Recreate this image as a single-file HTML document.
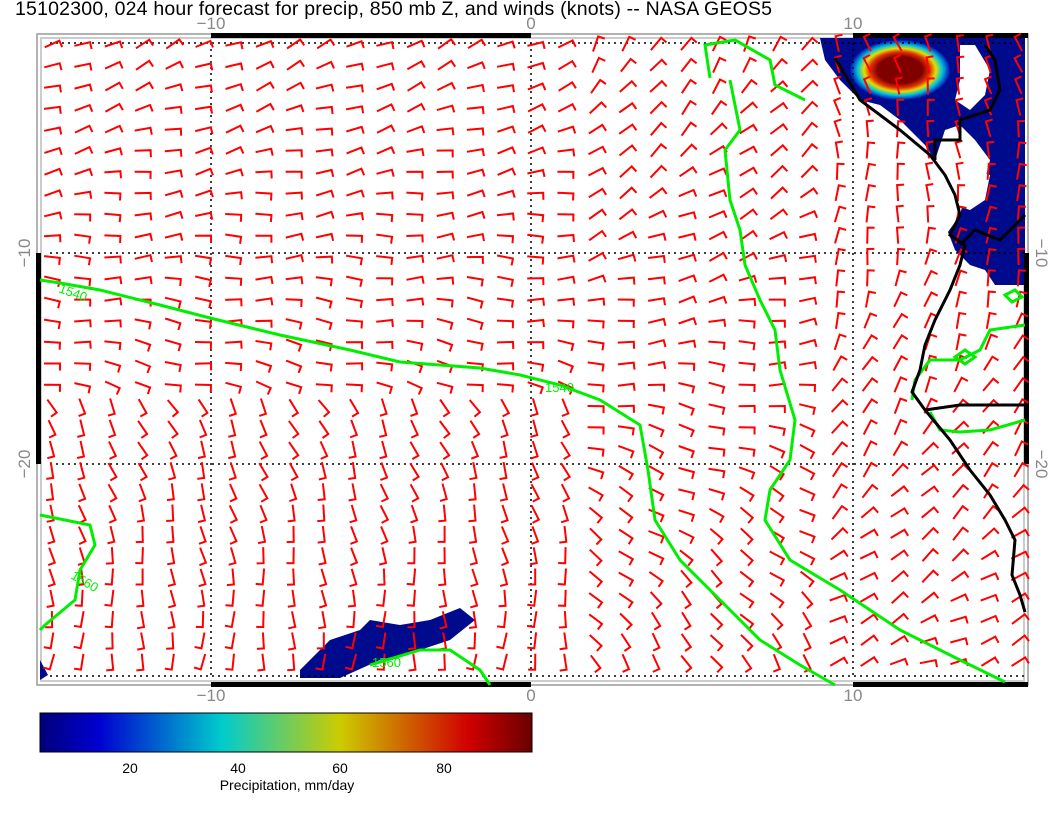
<!DOCTYPE html>
<html><head><meta charset="utf-8"><style>
body{margin:0;background:#fff;width:1056px;height:816px;overflow:hidden;font-family:"Liberation Sans",sans-serif}
</style></head><body>
<svg id="s" width="1056" height="816" xmlns="http://www.w3.org/2000/svg" style="position:absolute;left:0;top:0">
<defs>
<linearGradient id="cb" x1="0" x2="1" y1="0" y2="0">
<stop offset="0" stop-color="#00007a"/><stop offset="0.12" stop-color="#0000d0"/>
<stop offset="0.37" stop-color="#00cccc"/><stop offset="0.61" stop-color="#cccc00"/>
<stop offset="0.87" stop-color="#d00000"/><stop offset="1" stop-color="#6a0000"/>
</linearGradient>
<radialGradient id="rb" cx="0.5" cy="0.5" r="0.5">
<stop offset="0.45" stop-color="#800000"/><stop offset="0.6" stop-color="#e03000"/>
<stop offset="0.72" stop-color="#e0e000"/><stop offset="0.85" stop-color="#00c0e0"/>
<stop offset="1" stop-color="#0010b0"/>
</radialGradient>
</defs>
<text x="15" y="15" font-size="19.5" fill="#000" textLength="757">15102300, 024 hour forecast for precip, 850 mb Z, and winds (knots) -- NASA GEOS5</text>
<rect x="37" y="34" width="991" height="651" fill="none" stroke="#999" stroke-width="1.5"/>
<rect x="41" y="38" width="983" height="643" fill="none" stroke="#ccc" stroke-width="2"/>
<path d="M820,38 L1025,38 L1025,285 L995,285 L985,270 L970,265 L955,250 L948,232 L960,215 L965,195 L985,180 L990,160 L975,140 L960,125 L945,130 L935,160 L925,145 L900,120 L880,105 L860,100 L840,80 L825,60 Z" fill="#000a8c"/>
<path d="M955,205 L975,170 L990,175 L985,200 L970,210 Z" fill="#fff"/>
<path d="M960,45 L975,45 L990,70 L985,95 L970,110 L955,100 L960,80 Z" fill="#fff"/>
<ellipse cx="900" cy="70" rx="50" ry="30" fill="url(#rb)"/>
<path d="M300,670 L330,640 L360,630 L370,620 L400,625 L430,620 L460,608 L475,620 L450,640 L420,650 L380,660 L340,678 L300,678 Z" fill="#000a8c"/>
<path d="M40,660 L48,675 L40,680 Z" fill="#000a8c"/>
<g stroke="#000" stroke-width="1.5" stroke-dasharray="2,4" fill="none">
<line x1="50" y1="43" x2="1025" y2="43"/><line x1="50" y1="253" x2="1025" y2="253"/>
<line x1="50" y1="464" x2="1025" y2="464"/><line x1="50" y1="676" x2="1025" y2="676"/>
<line x1="211" y1="43" x2="211" y2="676"/><line x1="531" y1="43" x2="531" y2="676"/>
<line x1="853" y1="43" x2="853" y2="676"/>
</g>
<g fill="#000">
<rect x="211" y="33" width="320" height="5"/><rect x="853" y="33" width="175" height="5"/>
<rect x="211" y="682" width="320" height="5"/><rect x="853" y="682" width="175" height="5"/>
<rect x="36" y="253" width="5" height="211"/><rect x="1024" y="253" width="5" height="211"/>
</g>
<g id="barbs" stroke="#f00" stroke-width="2" fill="none"></g>
<g stroke="#00ee00" stroke-width="3" fill="none">
<polyline points="40,280 60,283 100,290 160,305 210,318 280,335 350,350 400,362 480,368 520,375 560,385 600,400 640,425 648,470 655,520 680,560 720,600 760,640 800,665 835,685"/>
<polyline points="710,78 705,45 735,40 770,60 775,85 805,100"/>
<polyline points="730,80 740,130 725,150 730,200 740,230 745,265 760,300 775,330 780,370 795,420 790,460 770,490 765,520 790,560 840,590 900,630 960,660 1005,682"/>
<polyline points="40,515 90,525 95,545 80,570 75,600 45,625 40,630"/>
<polyline points="370,665 420,650 450,650 480,670 490,685"/>
<polyline points="1025,325 990,330 980,350 960,360 930,360 915,380 912,400"/>
<polyline points="1025,420 990,430 960,432 940,430 930,412"/>
<polygon points="955,357 965,350 975,357 965,364"/>
<polygon points="1005,295 1015,290 1022,297 1012,302"/>
</g>
<g fill="#00ee00" font-size="13">
<text x="58" y="292" transform="rotate(20 58 292)">1540</text>
<text x="545" y="392">1540</text>
<text x="70" y="578" transform="rotate(30 70 578)">1560</text>
<text x="372" y="667">1560</text>
</g>
<g stroke="#000" stroke-width="3" fill="none">
<polyline points="835,58 860,100 900,130 930,155 945,175 955,195 960,215 950,235 965,245 960,265 950,290 935,320 925,345 920,370 912,392 925,410 950,440 970,470 990,495 1005,520 1015,540 1012,575 1020,595 1025,612"/>
<polyline points="925,410 960,405 1025,405"/>
<polyline points="935,160 935,140 960,140 960,120 990,110 1000,90 995,60 985,45"/>
<polyline points="960,245 975,230 1000,240 1015,225 1025,215"/>
</g>
<g fill="#888" font-size="17" text-anchor="middle">
<text x="211" y="29">−10</text><text x="531" y="29">0</text><text x="853" y="29">10</text>
<text x="211" y="701">−10</text><text x="531" y="701">0</text><text x="853" y="701">10</text>
<text x="30" y="253" transform="rotate(-90 30 253)">−10</text>
<text x="30" y="464" transform="rotate(-90 30 464)">−20</text>
<text x="1036" y="253" transform="rotate(90 1036 253)">−10</text>
<text x="1036" y="464" transform="rotate(90 1036 464)">−20</text>
</g>
<rect x="40" y="713" width="492" height="39" fill="url(#cb)" stroke="#000" stroke-width="1"/>
<g font-size="14" fill="#000" text-anchor="middle">
<text x="130" y="773">20</text><text x="238" y="773">40</text><text x="340" y="773">60</text><text x="444" y="773">80</text>
<text x="287" y="790">Precipitation, mm/day</text>
</g>
</svg>
<script>
var g=document.getElementById('barbs'),h='';
for(var r=0;r<30;r++){for(var c=0;c<33;c++){
var x=52+c*30.2,y=44+r*21.3;if(y>678)continue;
var fx=(x-40)/990,fy=(y-40)/640,a;
if(fx<0.55){a=-25+fy*70;if(fy>0.55)a=60+(fy-0.55)*80;}
else if(fx<0.8){a=-60+fy*120;}else{a=-110+fy*90;}
a+=Math.sin(c*1.3+r*0.7)*12;
var rad=a*Math.PI/180,L=16;
var dx=Math.cos(rad)*L,dy=Math.sin(rad)*L;
var x1=x-dx/2,y1=y-dy/2,x2=x+dx/2,y2=y+dy/2;
var px=-Math.sin(rad)*7,py=Math.cos(rad)*7;
h+='<path d="M'+x1.toFixed(1)+','+y1.toFixed(1)+'L'+x2.toFixed(1)+','+y2.toFixed(1)+'l'+px.toFixed(1)+','+py.toFixed(1)+'"/>';
}}
g.innerHTML=h;
</script>
</body></html>
